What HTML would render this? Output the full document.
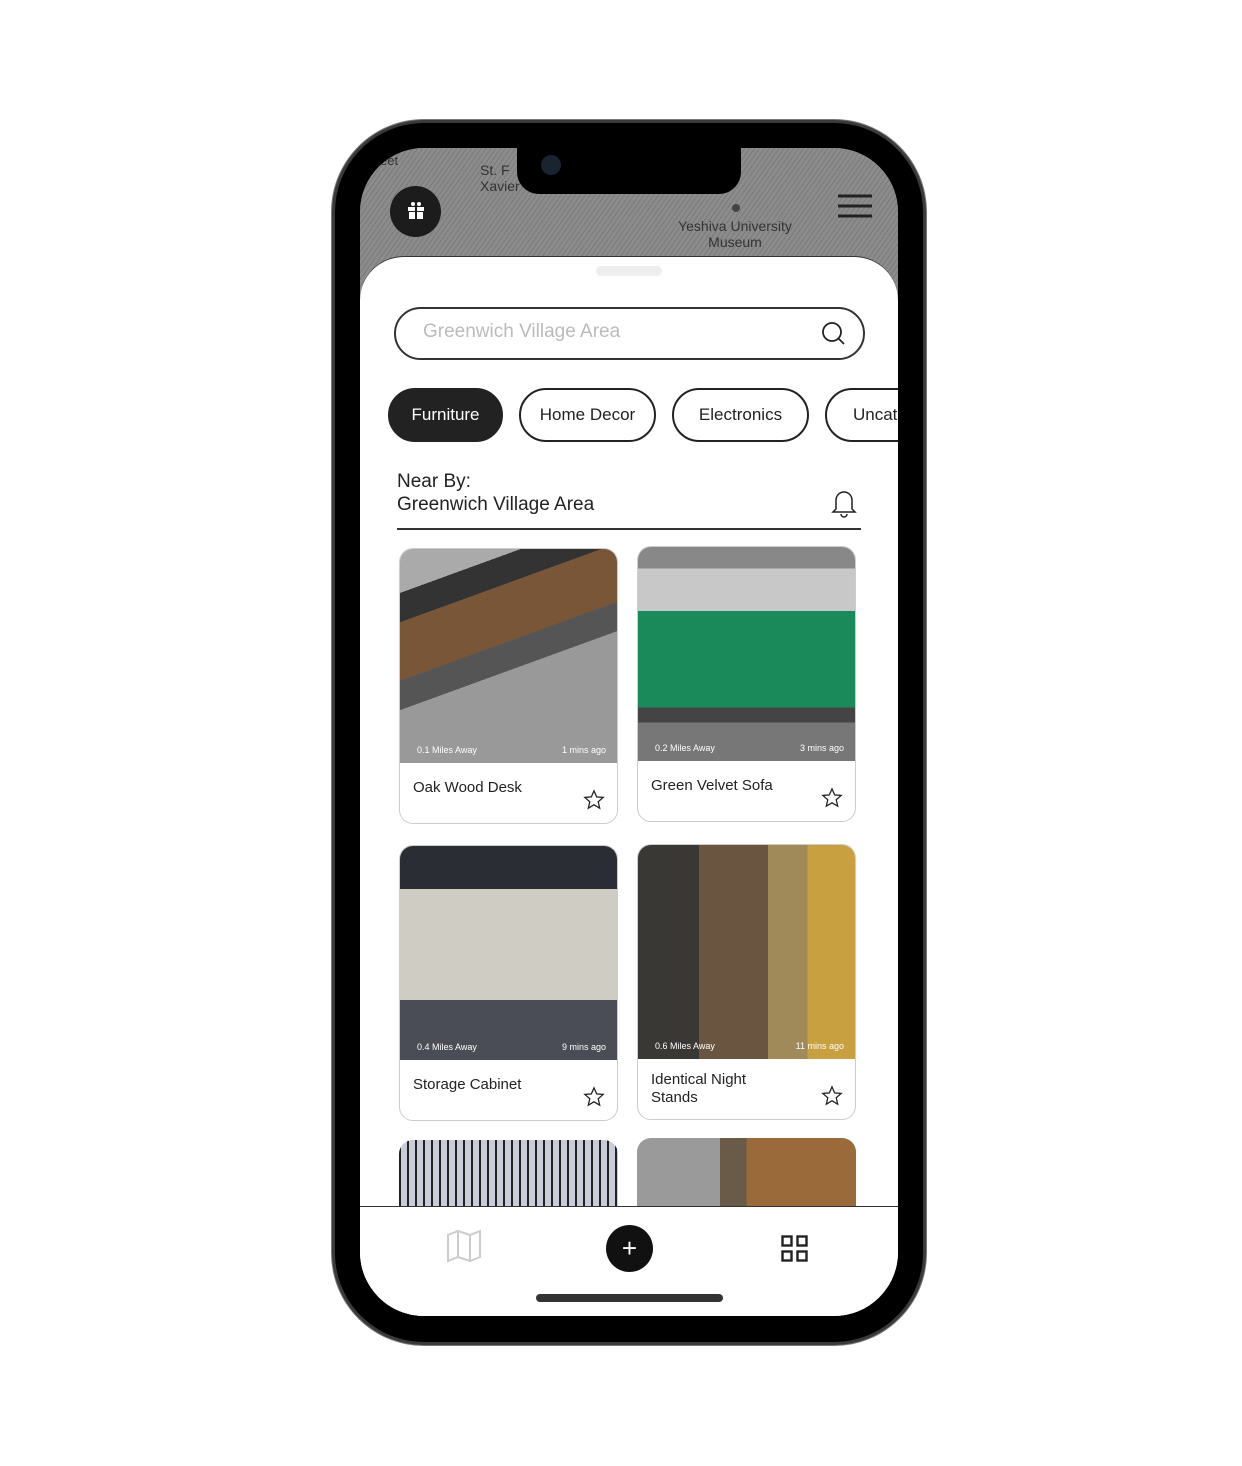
<!DOCTYPE html>
<html><head><style>
*{box-sizing:border-box;margin:0;padding:0}
body{width:1242px;height:1466px;background:#fff;position:relative;font-family:"Liberation Sans",sans-serif;overflow:hidden}
.abs{position:absolute}
.phone{left:332px;top:120px;width:594px;height:1225px;border-radius:92px;background:#000;border:3px solid #3a3a3a;box-shadow:0 0 0 1px #777}
.screen{left:360px;top:148px;width:538px;height:1168px;border-radius:64px;overflow:hidden;background:#8a8a8a}
.map{left:0;top:0;width:538px;height:140px;background:repeating-linear-gradient(125deg,#8c8c8c 0 3px,#7a7a7a 3px 4px)}
.sheet{left:0;top:108px;width:538px;height:1100px;background:#fff;border-radius:44px 44px 0 0;border-top:1px solid #333;overflow:hidden}
.pill{position:absolute;top:131px;height:54px;border:2px solid #222;border-radius:27px;font-size:17px;display:flex;align-items:center;justify-content:center;color:#222;white-space:nowrap}
.card{position:absolute;width:219px;height:276px;border:1px solid #ccc;border-radius:14px;overflow:hidden;background:#fff}
.img{position:absolute;left:0;top:0;width:100%;height:214px}
.meta{position:absolute;left:0;width:100%;display:flex;justify-content:space-between;padding:0 11px 4px 17px;font-size:9px;color:#fff}
.title{position:absolute;left:13px;top:230px;font-size:15px;color:#222;line-height:18px}
.star{position:absolute;right:12px;top:240px}
</style></head><body>
<div class="abs phone"></div>
<div class="abs screen">
 <div class="abs map"></div>
 <div class="abs" style="left:120px;top:14px;font-size:14px;color:#333;line-height:16px">St. F<br>Xavier</div>
 <div class="abs" style="left:20px;top:5px;font-size:13px;color:#333">eet</div>
 <div class="abs" style="left:372px;top:56px;width:8px;height:8px;border-radius:4px;background:#444"></div>
 <div class="abs" style="left:310px;top:70px;font-size:14px;color:#333;text-align:center;width:130px;line-height:16px">Yeshiva University<br>Museum</div>
 <div class="abs" style="left:30px;top:38px;width:51px;height:51px;border-radius:50%;background:#1c1c1c"></div>
 <svg class="abs" style="left:46px;top:53px" width="20" height="20" viewBox="0 0 20 20"><rect x="2" y="6" width="16" height="4" fill="#fff"/><rect x="3" y="11" width="14" height="7" fill="#fff"/><rect x="9" y="6" width="2" height="12" fill="#1c1c1c"/><circle cx="7" cy="3" r="2" fill="#fff"/><circle cx="13" cy="3" r="2" fill="#fff"/></svg>
 <svg class="abs" style="left:478px;top:46px" width="34" height="24"><g stroke="#222" stroke-width="3"><line x1="0" y1="2" x2="34" y2="2"/><line x1="0" y1="12" x2="34" y2="12"/><line x1="0" y1="22" x2="34" y2="22"/></g></svg>
 <div class="abs" style="left:157px;top:0;width:224px;height:46px;background:#000;border-radius:0 0 22px 22px"></div>
 <div class="abs" style="left:181px;top:7px;width:20px;height:20px;border-radius:50%;background:#1a2330"></div>
 <div class="abs sheet">
  <div class="abs" style="left:236px;top:9px;width:66px;height:10px;border-radius:5px;background:#eee"></div>
  <div class="abs" style="left:34px;top:50px;width:471px;height:53px;border:2px solid #333;border-radius:27px"></div>
  <div class="abs" style="left:63px;top:64px;font-size:19px;color:#bbb">Greenwich Village Area</div>
  <svg class="abs" style="left:461px;top:64px" width="26" height="26" viewBox="0 0 26 26"><circle cx="11" cy="11" r="9" fill="none" stroke="#222" stroke-width="1.8"/><line x1="17.5" y1="17.5" x2="23" y2="23" stroke="#222" stroke-width="1.8"/></svg>
  <div class="pill" style="left:28px;width:115px;background:#222;color:#fff">Furniture</div>
  <div class="pill" style="left:159px;width:137px">Home Decor</div>
  <div class="pill" style="left:312px;width:137px">Electronics</div>
  <div class="pill" style="left:465px;width:140px;justify-content:flex-start;padding-left:26px">Uncategorized</div>
  <div class="abs" style="left:37px;top:213px;font-size:19px;color:#222;line-height:23px">Near By:<br>Greenwich Village Area</div>
  <svg class="abs" style="left:470px;top:230px" width="28" height="32" viewBox="0 0 28 32"><path d="M6 22V13a8 8 0 0 1 16 0v9l3 3H3z" fill="none" stroke="#222" stroke-width="1.5"/><path d="M11 27a3 3 0 0 0 6 0" fill="none" stroke="#222" stroke-width="1.5"/></svg>
  <div class="abs" style="left:37px;top:271px;width:464px;height:1.5px;background:#333"></div>

  <div class="card" style="left:39px;top:291px"><div class="img" style="background:linear-gradient(160deg,#aaa 0 15%,#333 15% 25%,#7a5638 25% 45%,#555 45% 55%,#999 55%)"></div><div class="meta" style="top:196px"><span>0.1 Miles Away</span><span>1 mins ago</span></div><div class="title">Oak Wood Desk</div><svg class="star" width="22" height="22" viewBox="0 0 24 24"><path d="M12 2l2.9 6.6 7.1.6-5.4 4.7 1.6 7L12 17.2 5.8 20.9l1.6-7L2 9.2l7.1-.6z" fill="none" stroke="#222" stroke-width="1.4"/></svg></div>
  <div class="card" style="left:277px;top:289px"><div class="img" style="background:linear-gradient(180deg,#888 0 10%,#c8c8c8 10% 30%,#1a8a5a 30% 75%,#444 75% 82%,#777 82%)"></div><div class="meta" style="top:196px"><span>0.2 Miles Away</span><span>3 mins ago</span></div><div class="title">Green Velvet Sofa</div><svg class="star" width="22" height="22" viewBox="0 0 24 24"><path d="M12 2l2.9 6.6 7.1.6-5.4 4.7 1.6 7L12 17.2 5.8 20.9l1.6-7L2 9.2l7.1-.6z" fill="none" stroke="#222" stroke-width="1.4"/></svg></div>
  <div class="card" style="left:39px;top:588px"><div class="img" style="background:linear-gradient(180deg,#2a2d33 0 20%,#cfccc4 20% 72%,#4a4d55 72%)"></div><div class="meta" style="top:196px"><span>0.4 Miles Away</span><span>9 mins ago</span></div><div class="title">Storage Cabinet</div><svg class="star" width="22" height="22" viewBox="0 0 24 24"><path d="M12 2l2.9 6.6 7.1.6-5.4 4.7 1.6 7L12 17.2 5.8 20.9l1.6-7L2 9.2l7.1-.6z" fill="none" stroke="#222" stroke-width="1.4"/></svg></div>
  <div class="card" style="left:277px;top:587px"><div class="img" style="background:linear-gradient(90deg,#3a3835 0 28%,#6a5540 28% 60%,#a08a5a 60% 78%,#c8a040 78%)"></div><div class="meta" style="top:196px"><span>0.6 Miles Away</span><span>11 mins ago</span></div><div class="title" style="top:226px">Identical Night<br>Stands</div><svg class="star" width="22" height="22" viewBox="0 0 24 24"><path d="M12 2l2.9 6.6 7.1.6-5.4 4.7 1.6 7L12 17.2 5.8 20.9l1.6-7L2 9.2l7.1-.6z" fill="none" stroke="#222" stroke-width="1.4"/></svg></div>
  <div class="card" style="left:39px;top:883px;border:none"><div class="img" style="background:repeating-linear-gradient(90deg,#222 0 2px,#c8ccd8 2px 8px)"></div></div>
  <div class="card" style="left:277px;top:881px;border:none"><div class="img" style="background:linear-gradient(90deg,#9a9a9a 0 38%,#6a5a48 38% 50%,#9a6a3a 50%)"></div></div>
 </div>
 <div class="abs" style="left:0;top:1058px;width:538px;height:110px;background:#fff;border-top:1.5px solid #333"></div>
 <svg class="abs" style="left:86px;top:1081px" width="36" height="34" viewBox="0 0 36 34"><path d="M2 6l10-4 12 4 10-4v26l-10 4-12-4-10 4z M12 2v26 M24 6v26" fill="none" stroke="#ccc" stroke-width="2"/></svg>
 <div class="abs" style="left:246px;top:1077px;width:47px;height:47px;border-radius:50%;background:#111;color:#fff;font-size:26px;line-height:46px;text-align:center">+</div>
 <svg class="abs" style="left:421px;top:1087px" width="27" height="27"><g fill="none" stroke="#222" stroke-width="2.4"><rect x="1.5" y="1.5" width="9" height="9"/><rect x="16.5" y="1.5" width="9" height="9"/><rect x="1.5" y="16.5" width="9" height="9"/><rect x="16.5" y="16.5" width="9" height="9"/></g></svg>
 <div class="abs" style="left:176px;top:1146px;width:187px;height:8px;border-radius:4px;background:#333"></div>
</div>
</body></html>
